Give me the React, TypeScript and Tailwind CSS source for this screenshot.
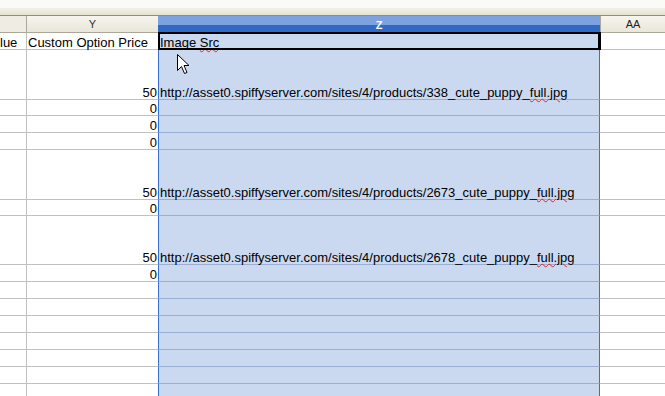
import React from "react";

type Row = {
  h: string;
  x?: string;
  y?: string;
  yLeft?: boolean;
  z?: React.ReactNode;
};

const font = "font-['Liberation_Sans',Arial,sans-serif]";

// spell-check squiggle; relative so the next row's fill doesn't cover it
function Squiggle({ children }: { children: React.ReactNode }) {
  return (
    <span className="relative underline decoration-wavy decoration-[#e0282a] decoration-1 underline-offset-[1px]">
      {children}
    </span>
  );
}

function Url({ id }: { id: string }) {
  return (
    <span>
      http://asset0.spiffyserver.com/sites/4/products/{id}_cute_puppy_
      <Squiggle>full.jpg</Squiggle>
    </span>
  );
}

const rows: Row[] = [
  {
    h: "h-[17px]",
    x: "lue",
    y: "Custom Option Price",
    yLeft: true,
    z: (
      <span>
        Image <Squiggle>Src</Squiggle>
      </span>
    ),
  },
  { h: "h-[50px]", y: "50", z: <Url id="338" /> },
  { h: "h-[16px]", y: "0" },
  { h: "h-[17px]", y: "0" },
  { h: "h-[17px]", y: "0" },
  { h: "h-[50px]", y: "50", z: <Url id="2673" /> },
  { h: "h-[16px]", y: "0" },
  { h: "h-[49px]", y: "50", z: <Url id="2678" /> },
  { h: "h-[17px]", y: "0" },
  { h: "h-[17px]" },
  { h: "h-[17px]" },
  { h: "h-[17px]" },
  { h: "h-[17px]" },
  { h: "h-[17px]" },
  { h: "h-[17px]" },
  { h: "h-[17px]" },
];

function Cursor() {
  return (
    <svg
      className="absolute left-[177px] top-[54px]"
      width="13"
      height="21"
      viewBox="0 0 13 21"
    >
      <path
        d="M0.5 0.5 L0.5 16.5 L4.5 12.5 L7.5 19.5 L10 18.5 L7 11.5 L12 11.5 Z"
        fill="#ffffff"
        stroke="#000000"
        strokeWidth="1"
        strokeLinejoin="miter"
      />
    </svg>
  );
}

export default function App() {
  return (
    <div className={`relative h-[396px] w-[665px] overflow-hidden bg-white text-[13px] leading-[13px] text-black ${font}`}>
      {/* toolbar edge */}
      <div className="h-[8px] bg-[#fbfaf6]" />
      <div className="h-[7px] bg-gradient-to-b from-[#f3f1e7] to-[#e5e2d2]" />
      <div className="h-px bg-[#8f8d82]" />

      {/* column headers */}
      <div className="flex h-[17px] text-[11px] leading-[16px]">
        <div className="w-[27px] shrink-0 border-r border-b border-[#aca899] bg-[#efede3]" />
        <div className="flex w-[131px] shrink-0 items-center justify-center border-b border-[#aca899] bg-gradient-to-b from-[#f6f5ee] to-[#e9e6da] text-[#333]">
          Y
        </div>
        <div className="relative flex w-[442px] shrink-0 flex-col">
          <div className="h-[9px] bg-[#7ea2df]" />
          <div className="h-[8px] bg-[#316ac5]" />
          <div className="absolute inset-0 flex items-center justify-center font-bold text-white">Z</div>
        </div>
        <div className="flex flex-1 items-center justify-center border-l border-b border-[#aca899] bg-gradient-to-b from-[#f6f5ee] to-[#e9e6da] text-[#222]">
          AA
        </div>
      </div>

      {/* grid */}
      {rows.map((r, i) => (
        <div key={i} className={`flex ${r.h}`}>
          <div className="flex w-[27px] shrink-0 items-end overflow-hidden whitespace-nowrap border-r border-b border-[#c0c0c0]">
            {r.x}
          </div>
          <div
            className={`flex w-[131px] shrink-0 items-end whitespace-nowrap border-b border-[#c0c0c0] ${
              r.yLeft ? "justify-start pl-px" : "justify-end pr-[1px]"
            }`}
          >
            {r.y}
          </div>
          <div className="flex w-[442px] shrink-0 items-end whitespace-nowrap border-x border-b border-x-[#3a6fd0] border-b-[#9aadd2] bg-[#cbd9f0] pl-px">
            {r.z}
          </div>
          <div className="flex-1 border-b border-[#c0c0c0]" />
        </div>
      ))}

      {/* active cell outline (Z1) */}
      <div className="pointer-events-none absolute left-[158px] top-[32px] h-[18px] w-[443px] border-2 border-r-[3px] border-black" />

      <Cursor />
    </div>
  );
}
